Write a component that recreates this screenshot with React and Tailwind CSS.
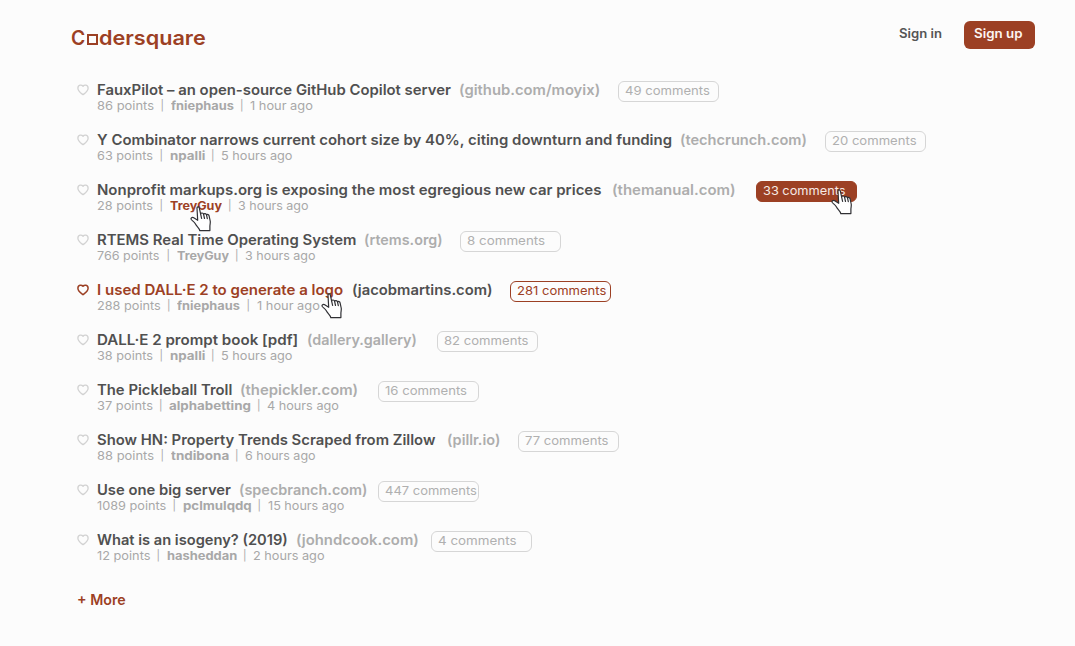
import { useLayoutEffect, useRef, useState } from "react";

const stories = [
  { title: ["FauxPilot – an open-source GitHub Copilot server", 354, 8], site: ["(github.com/moyix)", 141, 18], comments: ["49 comments", 85], points: ["86 points", 57], author: ["fniephaus", 63], time: ["1 hour ago", 63] },
  { title: ["Y Combinator narrows current cohort size by 40%, citing downturn and funding", 575, 8], site: ["(techcrunch.com)", 127, 18], comments: ["20 comments", 85], points: ["63 points", 56], author: ["npalli", 35], time: ["5 hours ago", 71] },
  { title: ["Nonprofit markups.org is exposing the most egregious new car prices", 504, 11], site: ["(themanual.com)", 124, 20], comments: ["33 comments", 83], points: ["28 points", 56], author: ["TreyGuy", 52], time: ["3 hours ago", 71], filled: true, authorActive: true },
  { title: ["RTEMS Real Time Operating System", 259, 8], site: ["(rtems.org)", 79, 17], comments: ["8 comments", 78], points: ["766 points", 63], author: ["TreyGuy", 52], time: ["3 hours ago", 71] },
  { title: ["I used DALL·E 2 to generate a logo", 246.5, 8.5], site: ["(jacobmartins.com)", 141, 17], comments: ["281 comments", 89], points: ["288 points", 63.5], author: ["fniephaus", 63], time: ["1 hour ago", 63] , active: true },
  { title: ["DALL·E 2 prompt book [pdf]", 201, 9], site: ["(dallery.gallery)", 110, 20], comments: ["82 comments", 84], points: ["38 points", 56], author: ["npalli", 35], time: ["5 hours ago", 71] },
  { title: ["The Pickleball Troll", 135, 8], site: ["(thepickler.com)", 118, 20], comments: ["16 comments", 82], points: ["37 points", 55.5], author: ["alphabetting", 81.5], time: ["4 hours ago", 72] },
  { title: ["Show HN: Property Trends Scraped from Zillow", 338, 12], site: ["(pillr.io)", 53, 18], comments: ["77 comments", 84], points: ["88 points", 57], author: ["tndibona", 58], time: ["6 hours ago", 71] },
  { title: ["Use one big server", 133.5, 8], site: ["(specbranch.com)", 128.5, 11], comments: ["447 comments", 92], points: ["1089 points", 69], author: ["pclmulqdq", 68.5], time: ["15 hours ago", 76] },
  { title: ["What is an isogeny? (2019)", 191, 8], site: ["(johndcook.com)", 123, 12], comments: ["4 comments", 78], points: ["12 points", 53], author: ["hasheddan", 70], time: ["2 hours ago", 71] },
];

// Stretches a run of text horizontally to a set width.
function Fit({ text, width, gap = 0, className = "" }) {
  const ref = useRef(null);
  const [scale, setScale] = useState(1);
  useLayoutEffect(() => {
    setScale(width / ref.current.offsetWidth);
  }, [width, text]);
  return (
    <span className={`block shrink-0 whitespace-nowrap ${className}`} style={{ width, marginRight: gap }}>
      <span ref={ref} className="inline-block origin-left" style={{ transform: `scaleX(${scale})` }}>
        {text}
      </span>
    </span>
  );
}

function Heart({ active }) {
  return (
    <svg viewBox="0 0 12 12" className={`mt-1 size-3 shrink-0 ${active ? "text-[#9c4024]" : "text-[#d2d2d2]"}`} fill="none" stroke="currentColor" strokeWidth={active ? 1.5 : 1.3}>
      <path d="M6 2.3C4.800 .6 .9 .5 .9 4.200c0 3 2.900 4.800 5.100 6.500 2.200-1.700 5.100-3.500 5.100-6.500C11.100 .5 7.200 .6 6 2.300Z" strokeLinejoin="round" />
    </svg>
  );
}

function Hand({ className }) {
  return (
    <svg viewBox="0 0 22 27" className={`absolute h-[27px] w-[22px] ${className}`} fill="#fff" stroke="#303034" strokeWidth="1.2" strokeLinejoin="round" strokeLinecap="round">
      <path d="M7 2.2C6.8.8 9 .4 9.3 1.8l1.3 6c.4-1.2 2.6-1.1 3 .5.6-1 2.5-.8 2.9.6.8-.8 2.3-.4 2.6.9l1.1 5.2c.4 2-.4 3.8-.3 5.5v4.1H9.8c-.3-2.5-3-4-4.5-6.8C4.300 16 2.500 15 1.300 13.500c-.8-1.200.5-2.500 2-1.900l4.400 2.700Z" />
      <path d="m10.600 7.800 1 4.700M13.600 8.300l.9 4.200M16.500 8.900l.8 3.800" fill="none" />
    </svg>
  );
}

function Divider() {
  return (
    <span className="flex w-[16.5px] shrink-0 justify-center text-[10.5px]">
      <span>|</span>
    </span>
  );
}

function Story({ story }) {
  const { title, site, comments, points, author, time, active, filled, authorActive } = story;
  const badge = filled
    ? "border-[#9c4024] bg-[#9c4024] text-[#f6e9e5]"
    : active
      ? "border-[#9c4024] text-[#9c4024]"
      : "border-[#d6d6d6] text-[#b0b0b0]";
  return (
    <li className="flex h-[50px] gap-2">
      <Heart active={active} />
      <div>
        <div className="flex h-[18px] text-[14.5px] leading-[20px] font-[560]">
          <Fit text={title[0]} width={title[1]} gap={title[2]} className={active ? "text-[#9c4024]" : "text-[#505050]"} />
          <Fit text={site[0]} width={site[1]} gap={site[2]} className={active ? "text-[#505050]" : "text-[#adadad]"} />
          <span className={`mt-px flex h-[21px] w-[101px] shrink-0 rounded-[6px] border pl-1.5 text-[12px] leading-[18px] font-normal ${badge}`}>
            <Fit text={comments[0]} width={comments[1]} />
          </span>
        </div>
        <div className="flex text-[11.8px] leading-[16px] text-[#a8a8a8]">
          <Fit text={points[0]} width={points[1]} />
          <Divider />
          <Fit text={author[0]} width={author[1]} className={`font-bold ${authorActive ? "text-[#9c4024]" : ""}`} />
          <Divider />
          <Fit text={time[0]} width={time[1]} />
        </div>
      </div>
    </li>
  );
}

export default function App() {
  return (
    <div className="relative h-[646px] w-[1075px] overflow-hidden bg-[#fcfcfc] font-['Inter',sans-serif] antialiased">
      <header className="flex h-20 items-start justify-between pr-10 pl-[71px]">
        <h1 className="flex pt-6 text-[20px] leading-[28px] font-[560] text-[#9c4024]">
          <Fit text="C" width={14.5} gap={1.5} />
          <span className="mt-[10px] mr-px h-[11px] w-[11px] border-2 border-[#9c4024]" />
          <Fit text="dersquare" width={107} />
        </h1>
        <nav className="flex pt-[21px] text-[12.5px] leading-[26px] font-[560]">
          <Fit text="Sign in" width={43} gap={22} className="text-[#555]" />
          <button className="flex h-7 w-[71px] rounded-[6px] bg-[#9c4024] pl-2.5 text-[#fdf5f2]">
            <Fit text="Sign up" width={48} className="text-left" />
          </button>
        </nav>
      </header>
      <ul className="pl-[77px]">
        {stories.map((s) => (
          <Story key={s.title[0]} story={s} />
        ))}
      </ul>
      <a className="flex pt-[10px] pl-[77px] text-[14.5px] leading-[20px] font-[560] text-[#9c4024]">
        <Fit text="+ More" width={49} />
      </a>
      <Hand className="top-[206px] left-[190px]" />
      <Hand className="top-[293px] left-[321px]" />
      <Hand className="top-[189px] left-[831px]" />
    </div>
  );
}
